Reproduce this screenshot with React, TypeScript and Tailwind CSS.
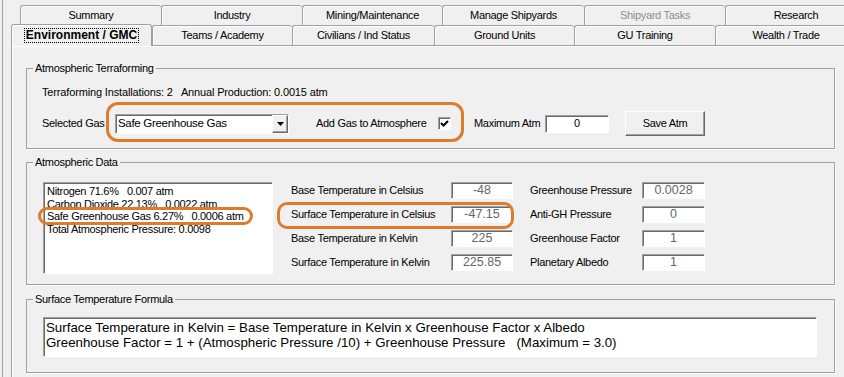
import React from 'react';

const sunken =
  'border border-t-[#a0a0a0] border-l-[#a0a0a0] border-b-white border-r-white shadow-[inset_1px_1px_0_#696969]';
const raised =
  'border border-t-white border-l-white border-b-[#696969] border-r-[#696969] shadow-[inset_-1px_-1px_0_#a0a0a0]';

const topTabs = [
  { label: 'Summary', w: 'w-[141px]' },
  { label: 'Industry', w: 'w-[141px]' },
  { label: 'Mining/Maintenance', w: 'w-[140px]' },
  { label: 'Manage Shipyards', w: 'w-[142px]' },
  { label: 'Shipyard Tasks', w: 'w-[141px]', disabled: true },
  { label: 'Research', w: 'w-[141px]' },
];

const bottomTabs = [
  { label: 'Teams / Academy', w: 'w-[140px]' },
  { label: 'Civilians / Ind Status', w: 'w-[142px]' },
  { label: 'Ground Units', w: 'w-[140px]' },
  { label: 'GU Training', w: 'w-[141px]' },
  { label: 'Wealth / Trade', w: 'w-[141px]' },
];

const gasLines = [
  'Nitrogen 71.6%   0.007 atm',
  'Carbon Dioxide 22.13%   0.0022 atm',
  'Safe Greenhouse Gas 6.27%   0.0006 atm',
  'Total Atmospheric Pressure: 0.0098',
];

const tempRows = [
  ['Base Temperature in Celsius', '-48', 'Greenhouse Pressure', '0.0028'],
  ['Surface Temperature in Celsius', '-47.15', 'Anti-GH Pressure', '0'],
  ['Base Temperature in Kelvin', '225', 'Greenhouse Factor', '1'],
  ['Surface Temperature in Kelvin', '225.85', 'Planetary Albedo', '1'],
];

const Tab: React.FC<{ label: string; w: string; disabled?: boolean }> = ({ label, w, disabled }) => (
  <div
    className={`${w} h-[20px] shrink-0 flex items-center justify-center border-t border-l border-[#a0a0a0] rounded-t-[3px] bg-[#f0f0f0] shadow-[inset_1px_1px_0_#fff] ${
      disabled ? 'text-[#8d8d8d]' : 'text-black'
    }`}
  >
    {label}
  </div>
);

const GroupBox: React.FC<{ title: string; h: string; mt: string; children: React.ReactNode }> = ({
  title,
  h,
  mt,
  children,
}) => (
  <fieldset
    className={`w-[809px] ${h} ${mt} shrink-0 border border-[#a0a0a0] shadow-[1px_1px_0_#fff] p-0 m-0`}
  >
    <legend className="ml-[6px] px-[2px] leading-[13px]">{title}</legend>
    {children}
  </fieldset>
);

export default function App() {
  return (
    <div className="relative w-[844px] h-[377px] overflow-hidden bg-[#f0f0f0] flex font-['Liberation_Sans',Arial,sans-serif] text-[11px] tracking-[-0.3px] text-black">
      {/* outer window edge */}
      <div className="w-[3px] shrink-0 border-r border-[#a0a0a0]" />

      {/* tab control */}
      <div className="ml-[8px] flex-1 flex flex-col min-w-0">
        <div className="flex h-[25px] pt-[5px] pl-[9px] shrink-0">
          {topTabs.map((t) => (
            <Tab key={t.label} {...t} />
          ))}
        </div>
        <div className="flex items-start h-[20px] shrink-0 relative z-10">
          <div className="w-[141px] h-[22px] -mt-[1px] shrink-0 flex items-center justify-center border-t border-l border-r border-[#a0a0a0] rounded-t-[3px] bg-[#f0f0f0] shadow-[inset_1px_1px_0_#fff]">
            <span className="border border-dotted border-black px-[1px] leading-[13px] font-bold text-[12px] tracking-normal">
              Environment / GMC
            </span>
          </div>
          {bottomTabs.map((t) => (
            <Tab key={t.label} {...t} />
          ))}
        </div>

        {/* tab page */}
        <div className="flex-1 flex flex-col pl-[14px] border-t border-l border-[#a0a0a0] shadow-[inset_1px_1px_0_#fff]">
          <GroupBox title="Atmospheric Terraforming" h="h-[87px]" mt="mt-[16px]">
            <div className="pl-[15px]">
              <div className="mt-[11px] leading-[13px] whitespace-pre tracking-[-0.15px]">
                Terraforming Installations: 2   Annual Production: 0.0015 atm
              </div>
              <div className="mt-[12px] h-[25px] flex items-center">
                <span className="w-[73px] shrink-0 whitespace-nowrap">Selected Gas</span>
                <div className={`w-[174px] h-[20px] shrink-0 bg-white flex items-center ${sunken}`}>
                  <span className="flex-1 pl-[2px] text-[11.5px]">Safe Greenhouse Gas</span>
                  <div className={`w-[16px] h-full flex items-center justify-center bg-[#f0f0f0] ${raised}`}>
                    <svg width="7" height="4" viewBox="0 0 7 4">
                      <polygon points="0,0 7,0 3.5,4" fill="#000" />
                    </svg>
                  </div>
                </div>
                <span className="ml-[27px] w-[122px] shrink-0 whitespace-nowrap">Add Gas to Atmosphere</span>
                <div className={`w-[13px] h-[13px] shrink-0 bg-white flex items-center justify-center ${sunken}`}>
                  <svg width="9" height="9" viewBox="0 0 9 9">
                    <path d="M1 4 L3.5 6.5 L8 2" stroke="#000" strokeWidth="2" fill="none" />
                  </svg>
                </div>
                <span className="ml-[23px] w-[71px] shrink-0 whitespace-nowrap">Maximum Atm</span>
                <div className={`w-[64px] h-[18px] shrink-0 bg-white flex items-center justify-center ${sunken}`}>
                  0
                </div>
                <button className={`ml-[16px] w-[80px] h-[25px] shrink-0 bg-[#f0f0f0] ${raised}`}>Save Atm</button>
              </div>
            </div>
          </GroupBox>

          <GroupBox title="Atmospheric Data" h="h-[129px]" mt="mt-[7px]">
            <div className="pl-[16px] mt-[13px] flex items-start">
              <div className={`w-[230px] h-[92px] shrink-0 bg-white pl-[3px] pt-[2px] ${sunken}`}>
                {gasLines.map((l) => (
                  <div key={l} className="leading-[12.7px] whitespace-pre">
                    {l}
                  </div>
                ))}
              </div>
              <div className="ml-[18px] grid grid-cols-[160px_62px_17px_112px_63px] gap-y-[7px]">
                {tempRows.map(([a, av, b, bv]) => (
                  <React.Fragment key={a}>
                    <div className="h-[17px] flex items-center whitespace-nowrap">{a}</div>
                    <div
                      className={`h-[17px] flex items-center justify-center bg-white text-[#666] text-[12.5px] tracking-normal ${sunken}`}
                    >
                      {av}
                    </div>
                    <div />
                    <div className="h-[17px] flex items-center whitespace-nowrap">{b}</div>
                    <div
                      className={`h-[17px] flex items-center justify-center bg-white text-[#666] text-[12.5px] tracking-normal ${sunken}`}
                    >
                      {bv}
                    </div>
                  </React.Fragment>
                ))}
              </div>
            </div>
          </GroupBox>

          <GroupBox title="Surface Temperature Formula" h="h-[80px]" mt="mt-[8px]">
            <div className="pl-[16px] mt-[11px]">
              <div className={`w-[774px] h-[40px] bg-white pl-[2px] pt-[2px] text-[13.3px] tracking-normal ${sunken}`}>
                <div className="leading-[15px] whitespace-pre">
                  Surface Temperature in Kelvin = Base Temperature in Kelvin x Greenhouse Factor x Albedo
                </div>
                <div className="leading-[15px] whitespace-pre">
                  Greenhouse Factor = 1 + (Atmospheric Pressure /10) + Greenhouse Pressure   (Maximum = 3.0)
                </div>
              </div>
            </div>
          </GroupBox>
        </div>
      </div>

      {/* orange highlight annotations */}
      <div className="absolute left-[106px] top-[102px] w-[358px] h-[40px] rounded-[12px] border-[3px] border-[#de7b2c] pointer-events-none" />
      <div className="absolute left-[38px] top-[207px] w-[215px] h-[18px] rounded-[9px] border-[3px] border-[#de7b2c] pointer-events-none" />
      <div className="absolute left-[277px] top-[202px] w-[237px] h-[27px] rounded-[10px] border-[3px] border-[#de7b2c] pointer-events-none" />
    </div>
  );
}
